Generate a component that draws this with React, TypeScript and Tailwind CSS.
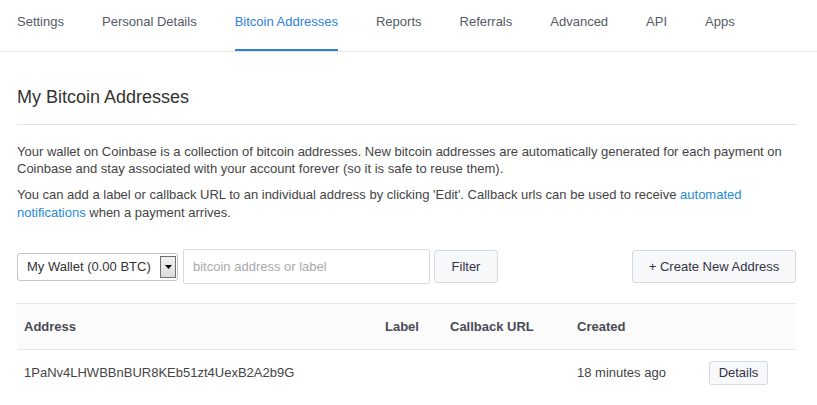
import React from 'react';

const tabs = [
  'Settings',
  'Personal Details',
  'Bitcoin Addresses',
  'Reports',
  'Referrals',
  'Advanced',
  'API',
  'Apps',
];

export default function App() {
  return (
    <div className="w-[817px] h-[405px] overflow-hidden bg-white font-['Liberation_Sans',Arial,sans-serif] text-[13px] text-[#444]">
      {/* Top tabs */}
      <nav className="border-b border-[#e6e6e6]">
        <ul className="flex gap-[38px] px-[17px]">
          {tabs.map((t) => (
            <li
              key={t}
              className={
                'h-[51px] pt-[14px] border-b-2 leading-[16px] ' +
                (t === 'Bitcoin Addresses'
                  ? 'border-[#2f80dd] text-[#2f80dd]'
                  : 'border-transparent text-[#555a66]')
              }
            >
              {t}
            </li>
          ))}
        </ul>
      </nav>

      <main className="pl-[17px] pr-[21px]">
        <h1 className="pt-[35px] text-[18px] leading-[20px] text-[#333]">My Bitcoin Addresses</h1>
        <hr className="mt-[17px] border-t border-[#e3e3e3]" />

        <div className="mt-[18px] text-[13px] leading-[17px] text-[#444]">
          <p>
            Your wallet on Coinbase is a collection of bitcoin addresses. New bitcoin addresses are automatically generated for each payment on
            Coinbase and stay associated with your account forever (so it is safe to reuse them).
          </p>
          <p className="mt-[9px] leading-[18px]">
            You can add a label or callback URL to an individual address by clicking 'Edit'. Callback urls can be used to receive{' '}
            <a className="text-[#1f8ad4]">automated notifications</a> when a payment arrives.
          </p>
        </div>

        {/* Controls */}
        <div className="mt-[27px] flex items-center">
          <div className="flex items-center h-[28px] w-[161px] border border-[#c4c4c4] rounded-[3px] pl-[9px] pr-[1px]">
            <span className="flex-1 text-[13px] text-[#333]">My Wallet (0.00 BTC)</span>
            <span className="flex items-center justify-center w-[16px] h-[22px] border border-[#707070] bg-gradient-to-b from-[#f2f2f2] to-[#dcdcdc]">
              <svg width="7" height="4" viewBox="0 0 7 4">
                <path d="M0 0h7L3.5 4z" fill="#000" />
              </svg>
            </span>
          </div>
          <div className="ml-[5px] flex items-center h-[35px] w-[247px] border border-[#dcdcdc] rounded-[2px] pl-[9px] text-[13px] text-[#aaa]">
            bitcoin address or label
          </div>
          <button className="ml-[4px] h-[33px] w-[64px] border border-[#d6dae0] rounded-[3px] bg-[#f7f8fa] text-[13px] text-[#333344]">
            Filter
          </button>
          <button className="ml-auto h-[33px] w-[164px] border border-[#d6dae0] rounded-[3px] bg-[#f7f8fa] text-[13px] text-[#333344]">
            + Create New Address
          </button>
        </div>

        {/* Table */}
        <div className="mt-[19px]">
          <div className="grid grid-cols-[361px_65px_127px_132px_1fr] h-[47px] items-center bg-[#fbfbfb] border-y border-[#e6e6ea] font-bold text-[13px] text-[#4a4a55]">
            <div className="pl-[7px]">Address</div>
            <div className="pl-[7px]">Label</div>
            <div className="pl-[7px]">Callback URL</div>
            <div className="pl-[7px]">Created</div>
            <div />
          </div>
          <div className="grid grid-cols-[361px_65px_127px_132px_1fr] h-[46px] items-center text-[13px] text-[#444]">
            <div className="pl-[7px] -mt-[1px]">1PaNv4LHWBBnBUR8KEb51zt4UexB2A2b9G</div>
            <div />
            <div />
            <div className="pl-[7px] -mt-[1px]">18 minutes ago</div>
            <div className="pl-[7px]">
              <button className="h-[24px] w-[59px] border border-[#d6dae0] rounded-[3px] bg-[#f7f8fa] text-[13px] text-[#333344]">
                Details
              </button>
            </div>
          </div>
        </div>
      </main>
    </div>
  );
}
